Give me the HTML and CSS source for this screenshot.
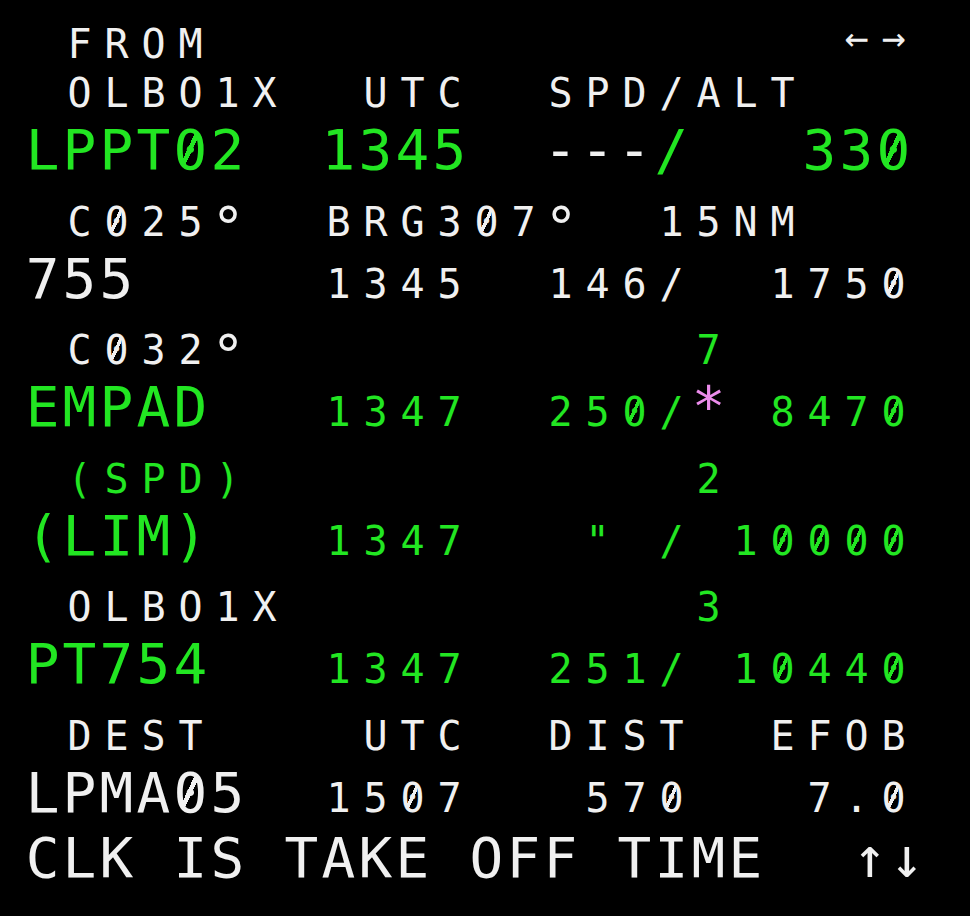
FILE: index.html
```html
<!DOCTYPE html>
<html lang="en">
<head>
    <meta charset="UTF-8">
    <title>F-PLN</title>
    <link rel="stylesheet" href="styles.css">
</head>
<body>
    <!-- MCDU flight plan page, 24 columns -->
    <div class="mcdu">
        <div class="ln"><span class="s w"> FROM                 </span><span class="s w lr">←→</span></div>

        <div class="pair first">
            <div class="ln"><span class="s w"> OLBO1X  UTC  SPD/ALT</span></div>
            <div class="ln big"><span class="l g">LPPT<span class="z">0</span>2  1345  </span><span class="l w">---</span><span class="l g">/   33<span class="z">0</span></span></div>
        </div>

        <div class="pair">
            <div class="ln"><span class="s w"> C<span class="z">0</span>25<span class="deg">°</span>  BRG3<span class="z">0</span>7<span class="deg">°</span>  15NM</span></div>
            <div class="ln big"><span class="l w">755</span><span class="s w">     1345  146/  175<span class="z">0</span></span></div>
        </div>

        <div class="pair">
            <div class="ln"><span class="s w"> C<span class="z">0</span>32<span class="deg">°</span></span><span class="s g">            7</span></div>
            <div class="ln big"><span class="l g">EMPAD</span><span class="s g">   1347  25<span class="z">0</span>/</span><span class="l m">*</span><span class="s g"> 847<span class="z">0</span></span></div>
        </div>

        <div class="pair">
            <div class="ln"><span class="s g"> (SPD)            2</span></div>
            <div class="ln big"><span class="l g">(LIM)</span><span class="s g">   1347   " / 1<span class="z">0</span><span class="z">0</span><span class="z">0</span><span class="z">0</span></span></div>
        </div>

        <div class="pair">
            <div class="ln"><span class="s w"> OLBO1X</span><span class="s g">           3</span></div>
            <div class="ln big"><span class="l g">PT754</span><span class="s g">   1347  251/ 1<span class="z">0</span>44<span class="z">0</span></span></div>
        </div>

        <div class="pair">
            <div class="ln"><span class="s w"> DEST    UTC  DIST  EFOB</span></div>
            <div class="ln big"><span class="l w">LPMA<span class="z">0</span>5</span><span class="s w">  15<span class="z">0</span>7   57<span class="z">0</span>   7.<span class="z">0</span></span></div>
        </div>

        <!-- scratchpad -->
        <div class="ln big scratch"><span class="l w">CLK IS TAKE OFF TIME  </span><span class="l w ud">↑↓</span></div>
    </div>
</body>
</html>
```
FILE: styles.css
```css
body {
    margin: 0;
    background: #000;
    font-family: "DejaVu Sans Mono", monospace;
}

.mcdu {
    display: flex;
    flex-direction: column;
    width: 970px;
    height: 916px;
    padding: 17px 0 0 24px;
    box-sizing: border-box;
    overflow: hidden;
}

/* one display line, cells are 37px wide */
.ln {
    white-space: pre;
    height: 40px;
    line-height: 40px;
    font-size: 40px;
}

.ln.big {
    height: 56px;
    line-height: 56px;
    font-size: 56px;
}

.pair {
    display: flex;
    flex-direction: column;
    gap: 9px;
    margin-top: 23.5px;
}

.pair.first {
    margin-top: 16px;
}

.scratch {
    margin-top: 9px;
}

/* small font: 40px advance 24.08 + spacing = 37 */
.s {
    font-size: 40px;
    letter-spacing: 12.92px;
    padding-left: 6.46px;
    margin-right: -6.46px;
}

/* large font: 56px advance 33.72 + spacing = 37 */
.l {
    font-size: 56px;
    letter-spacing: 3.28px;
    padding-left: 1.64px;
    margin-right: -1.64px;
}

.w { color: #f0f0f0; }
.g { color: #22e622; }
.m { color: #ec8cec; }

/* slashed zero: diagonal stroke through the glyph */
.z {
    background: linear-gradient(to bottom right,
        transparent calc(50% - 0.042em),
        currentColor calc(50% - 0.042em),
        currentColor calc(50% + 0.042em),
        transparent calc(50% + 0.042em)) no-repeat;
    background-size: 0.26em 0.56em;
    background-position: 0.171em 0.284em;
}

/* degree sign drawn a bit larger than the font's */
.deg {
    display: inline-block;
    letter-spacing: 0;
    margin-right: 12.92px;
    transform: scale(1.4);
    transform-origin: 12px 5px;
}

.lr {
    vertical-align: 7px;
}

.ud {
    padding-left: 15px;
}
```
